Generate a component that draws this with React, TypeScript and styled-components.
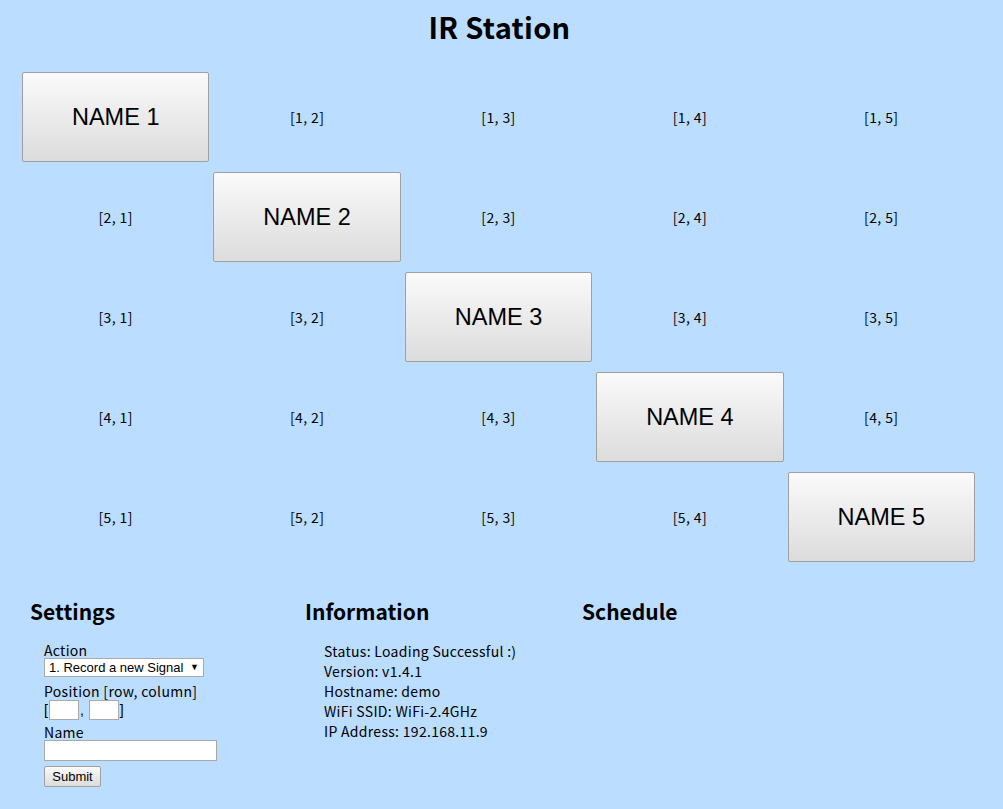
import React from "react";
import styled, { createGlobalStyle } from "styled-components";

const Global = createGlobalStyle`
  html, body { margin: 0; padding: 0; }
  body {
    background: #bbddff;
    font-family: "Noto Sans CJK JP", "DejaVu Sans", sans-serif;
    color: #000;
    width: 1003px;
    min-height: 809px;
  }
`;

const Page = styled.div`
  display: flex;
  flex-direction: column;
  padding-bottom: 20px;
`;

const Title = styled.h1`
  margin: 7px 0 0;
  height: 38px;
  line-height: 38px;
  text-align: center;
  font-size: 29px;
  font-weight: 700;
  letter-spacing: 0.3px;
  padding-right: 4px;
`;

const Grid = styled.div`
  display: grid;
  grid-template-columns: repeat(5, 1fr);
  width: 957px;
  margin: 22px 0 0 20px;
`;

const Cell = styled.div`
  height: 100px;
  padding: 5px 2px;
  box-sizing: border-box;
  display: flex;
  align-items: center;
  justify-content: center;
  font-size: 14px;
  letter-spacing: 0.4px;
`;

const NameButton = styled.button`
  width: 100%;
  height: 100%;
  box-sizing: border-box;
  border: 1px solid #a0a0a0;
  border-radius: 2px;
  background: linear-gradient(#fafafa, #dcdcdc);
  font-family: "Liberation Sans", Arial, sans-serif;
  font-size: 23.5px;
  letter-spacing: 0;
  color: #000;
  padding: 0;
`;

const Sections = styled.div`
  display: grid;
  grid-template-columns: 275px 277px 276px;
  margin: 30px 0 0 30px;
`;

const Section = styled.div`
  display: flex;
  flex-direction: column;
`;

const Heading = styled.h2`
  margin: 0;
  height: 28px;
  line-height: 28px;
  font-size: 21px;
  font-weight: 700;
`;

const Form = styled.form`
  display: flex;
  flex-direction: column;
  align-items: flex-start;
  margin: 18px 0 0 14px;
  font-size: 14px;
  letter-spacing: 0.3px;
`;

const Label = styled.div`
  line-height: 15px;
  height: 15px;
`;

const Select = styled.div`
  width: 160px;
  height: 19px;
  box-sizing: border-box;
  border: 1px solid #a9a9a9;
  background: #fff;
  font-family: "Liberation Sans", Arial, sans-serif;
  font-size: 13px;
  letter-spacing: 0;
  line-height: 17px;
  padding-left: 4px;
  display: flex;
  justify-content: space-between;
  align-items: center;
  margin-bottom: 7px;
  & span:last-child { font-size: 9px; padding-right: 4px; }
`;

const PosRow = styled.div`
  display: flex;
  align-items: center;
  height: 20px;
  margin: 1px 0 5px;
`;

const Punct = styled.span`
  font-family: "Liberation Sans", Arial, sans-serif;
  font-size: 14px;
  line-height: 14px;
  letter-spacing: 0;
`;

const SmallInput = styled.input`
  width: 30px;
  height: 20px;
  box-sizing: border-box;
  border: 1px solid #a9a9a9;
  background: #fff;
  padding: 0;
  margin: 0 1px;
`;

const NameInput = styled.input`
  width: 173px;
  height: 21px;
  box-sizing: border-box;
  border: 1px solid #a9a9a9;
  background: #fff;
  padding: 0;
  margin: 0 0 5px;
`;

const Submit = styled.button`
  height: 21px;
  width: 57px;
  box-sizing: border-box;
  border: 1px solid #a0a0a0;
  border-radius: 2px;
  background: linear-gradient(#fafafa, #dcdcdc);
  font-family: "Liberation Sans", Arial, sans-serif;
  font-size: 13px;
  color: #000;
  padding: 0;
`;

const InfoList = styled.div`
  display: flex;
  flex-direction: column;
  margin: 16px 0 0 19px;
  font-size: 14px;
  letter-spacing: 0.3px;
`;

const InfoLine = styled.div`
  height: 20px;
  line-height: 20px;
  white-space: nowrap;
`;

const info = [
  "Status: Loading Successful :)",
  "Version: v1.4.1",
  "Hostname: demo",
  "WiFi SSID: WiFi-2.4GHz",
  "IP Address: 192.168.11.9",
];

export default function App() {
  const rows = [1, 2, 3, 4, 5];
  return (
    <Page>
      <Global />
      <Title>IR Station</Title>
      <Grid>
        {rows.map((r) =>
          rows.map((c) => (
            <Cell key={`${r}-${c}`}>
              {r === c ? <NameButton>NAME {r}</NameButton> : `[${r}, ${c}]`}
            </Cell>
          ))
        )}
      </Grid>
      <Sections>
        <Section>
          <Heading>Settings</Heading>
          <Form onSubmit={(e) => e.preventDefault()}>
            <Label>Action</Label>
            <Select>
              <span>1. Record a new Signal</span>
              <span>▼</span>
            </Select>
            <Label>Position [row, column]</Label>
            <PosRow>
              <Punct>[</Punct>
              <SmallInput />
              <Punct>,&nbsp;</Punct>
              <SmallInput />
              <Punct>]</Punct>
            </PosRow>
            <Label>Name</Label>
            <NameInput />
            <Submit type="button">Submit</Submit>
          </Form>
        </Section>
        <Section>
          <Heading>Information</Heading>
          <InfoList>
            {info.map((t) => (
              <InfoLine key={t}>{t}</InfoLine>
            ))}
          </InfoList>
        </Section>
        <Section>
          <Heading>Schedule</Heading>
        </Section>
      </Sections>
    </Page>
  );
}
